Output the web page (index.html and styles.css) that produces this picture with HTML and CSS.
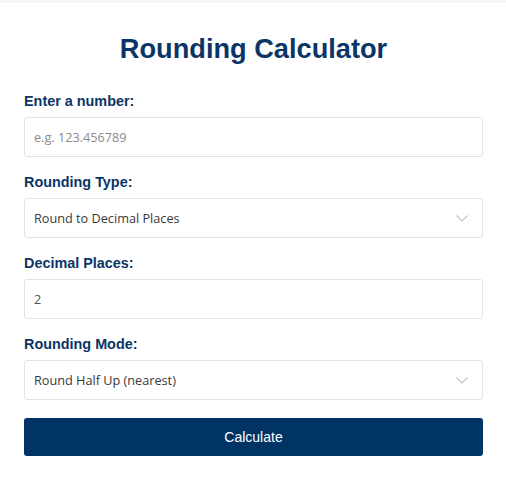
FILE: index.html
```html
<!DOCTYPE html>
<html lang="en">
<head>
<meta charset="utf-8">
<title>Rounding Calculator</title>
<link rel="stylesheet" href="styles.css">
</head>
<body>
<div class="card">
  <h1 class="title">Rounding Calculator</h1>
  <div class="field">
    <label class="label" for="num">Enter a number:</label>
    <div class="control"><span class="placeholder">e.g. 123.456789</span></div>
  </div>
  <div class="field">
    <label class="label">Rounding Type:</label>
    <div class="control select"><span class="value">Round to Decimal Places</span>
      <svg class="chev" width="12" height="7" viewBox="0 0 12 7"><polyline points="0.5,0.5 6,6 11.5,0.5" fill="none" stroke="#c4c4c4" stroke-width="1.2"/></svg>
    </div>
  </div>
  <div class="field">
    <label class="label">Decimal Places:</label>
    <div class="control"><span class="value muted">2</span></div>
  </div>
  <div class="field">
    <label class="label">Rounding Mode:</label>
    <div class="control select"><span class="value">Round Half Up (nearest)</span>
      <svg class="chev" width="12" height="7" viewBox="0 0 12 7"><polyline points="0.5,0.5 6,6 11.5,0.5" fill="none" stroke="#c4c4c4" stroke-width="1.2"/></svg>
    </div>
  </div>
  <button class="btn">Calculate</button>
</div>
</body>
</html>
```
FILE: styles.css
```css
html, body {
  margin: 0;
  padding: 0;
}
body {
  background: #f5f5f5;
  font-family: "Liberation Sans", Arial, sans-serif;
}
.card {
  background: #ffffff;
  margin-top: 3px;
  padding: 30px 23px 24px 24px;
  min-height: 440px;
}
.title {
  margin: 0 0 28px 0;
  font-size: 27.2px;
  font-weight: bold;
  color: #0b3566;
  text-align: center;
}
.field {
  margin-bottom: 17px;
}
.label {
  display: block;
  font-size: 14.4px;
  font-weight: bold;
  color: #0b3566;
  margin-bottom: 8px;
}
.control {
  box-sizing: border-box;
  height: 40px;
  border: 1px solid #e2e2e2;
  border-radius: 3px;
  display: flex;
  align-items: center;
  justify-content: space-between;
  padding: 0 14px 0 9px;
  font-family: "Open Sans", "Noto Sans", sans-serif;
  font-size: 12.7px;
}
.placeholder {
  color: #8a8a8a;
}
.value {
  color: #3a3a3a;
}
.muted {
  color: #555;
}
.btn {
  display: block;
  width: 100%;
  height: 38px;
  margin-top: 18px;
  border: none;
  border-radius: 3px;
  background: #003366;
  color: #ffffff;
  font-family: "Liberation Sans", Arial, sans-serif;
  font-size: 14px;
}
```
